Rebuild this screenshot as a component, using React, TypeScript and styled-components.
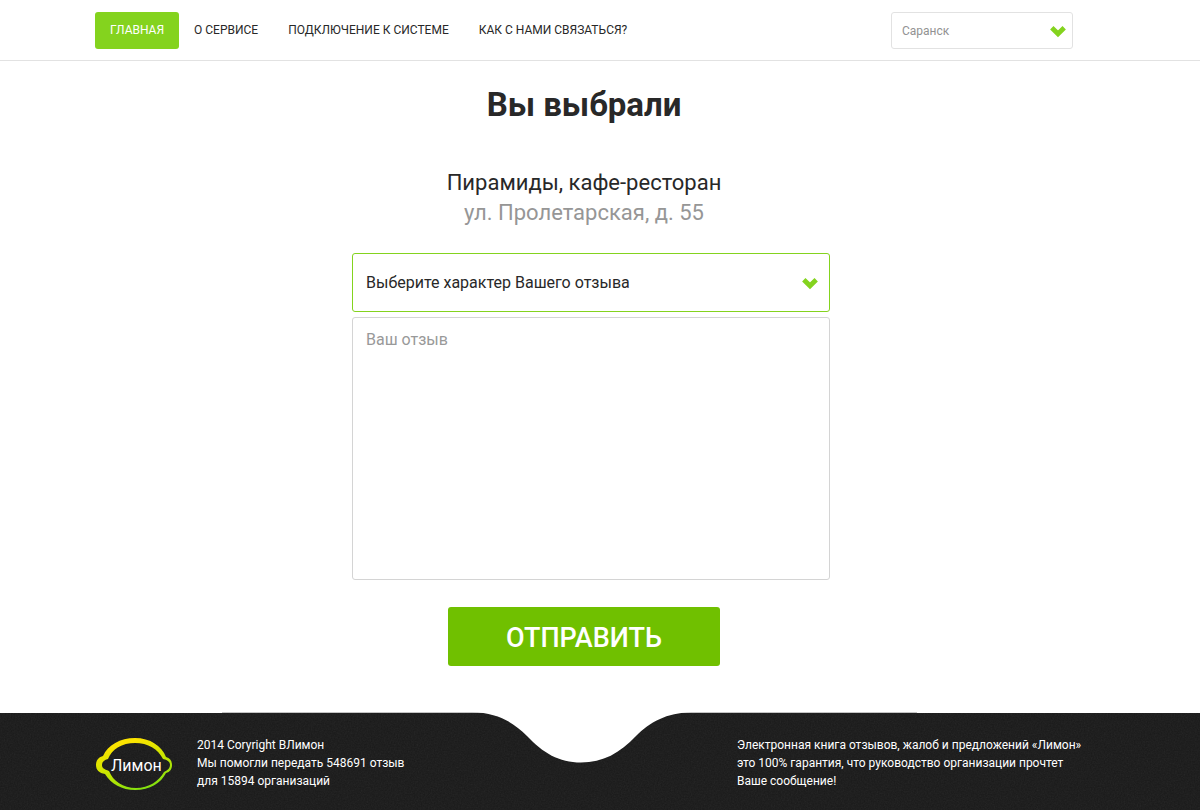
import React from "react";
import styled, { createGlobalStyle } from "styled-components";

const GlobalStyle = createGlobalStyle`
  *, *::before, *::after { box-sizing: border-box; }
  body {
    margin: 0;
    background: #fff;
    color: #282828;
    font-family: Roboto, "Noto Sans", sans-serif;
  }
  #root { min-height: 100vh; display: flex; flex-direction: column; }
  button, select, textarea { font-family: inherit; margin: 0; }
`;

const Header = styled.header`
  padding: 12px 32px 11px 0;
  border-bottom: 1px solid #e2e2e2;
`;

const Container = styled.div`
  width: 100%;
  max-width: 978px;
  margin: 0 auto;
  display: flex;
  justify-content: space-between;
`;

const Nav = styled.nav`
  display: flex;
`;

const NavLink = styled.a<{ $active?: boolean }>`
  padding: 0 15px;
  border-radius: 3px;
  font-size: 12px;
  line-height: 37px;
  white-space: nowrap;
  text-decoration: none;
  text-transform: uppercase;
  color: ${(p) => (p.$active ? "#fff" : "#282828")};
  background: ${(p) => (p.$active ? "#84d31e" : "transparent")};
`;

const SelectBox = styled.div<{ $width: string }>`
  position: relative;
  display: flex;
  align-items: center;
  width: ${(p) => p.$width};
`;

const CitySelect = styled.select`
  appearance: none;
  width: 100%;
  height: 37px;
  padding: 0 32px 0 10px;
  border: 1px solid #e2e2e2;
  border-radius: 3px;
  background: #fff;
  color: #929292;
  font-size: 12px;
`;

const KindSelect = styled.select`
  appearance: none;
  width: 100%;
  height: 59px;
  padding: 0 40px 0 13px;
  border: 1px solid #84d31e;
  border-radius: 3px;
  background: #fff;
  color: #282828;
  font-size: 16px;
`;

const Arrow = styled.svg<{ $right: number }>`
  position: absolute;
  right: ${(p) => p.$right}px;
  width: 18px;
  height: 15px;
  pointer-events: none;
`;

const Main = styled.main`
  flex: 1;
  display: flex;
  flex-direction: column;
  align-items: center;
  padding: 21px 32px 47px 0;
`;

const Title = styled.h1`
  margin: 0 0 40px;
  font-size: 33px;
  line-height: 46px;
  font-weight: 700;
`;

const Place = styled.p<{ $muted?: boolean }>`
  margin: 0;
  font-size: 22px;
  line-height: 30px;
  color: ${(p) => (p.$muted ? "#969696" : "#282828")};
`;

const Form = styled.form`
  width: 100%;
  display: flex;
  flex-direction: column;
  align-items: center;
  padding-top: 25px;
`;

const Fields = styled.div`
  width: 100%;
  max-width: 492px;
  padding-left: 14px;
  display: flex;
  flex-direction: column;
  gap: 5px;
`;

const Review = styled.textarea`
  display: block;
  width: 100%;
  height: 263px;
  padding: 12px 13px;
  border: 1px solid #d4d4d4;
  border-radius: 3px;
  resize: none;
  font-size: 16px;
  line-height: 20px;
  color: #282828;
  &::placeholder { color: #999; opacity: 1; }
`;

const Submit = styled.button`
  width: 272px;
  height: 59px;
  margin-top: 27px;
  padding: 2px 0 0;
  border: 0;
  border-radius: 3px;
  background: #70c000;
  color: #fff;
  font-size: 27px;
  font-weight: 500;
  text-transform: uppercase;
`;

const Footer = styled.footer`
  position: relative;
  padding: 22px 32px 19px 0;
  background: #191919;
  color: #fff;
`;

const Texture = styled.svg`
  position: absolute;
  inset: 0;
  width: 100%;
  height: 100%;
`;

const Wave = styled.svg`
  position: absolute;
  top: -1px;
  left: calc(50% - 378px);
  width: 695px;
  height: 51px;
`;

const FooterRow = styled(Container)`
  position: relative;
`;

const Brand = styled.div`
  display: flex;
  gap: 24px;
`;

const Logo = styled.svg`
  width: 78px;
  height: 54px;
  margin-top: 2px;
`;

const FooterText = styled.p<{ $width?: number }>`
  margin: 0;
  width: ${(p) => (p.$width ? p.$width + "px" : "auto")};
  padding-top: 1px;
  font-size: 12px;
  line-height: 18px;
  white-space: nowrap;
`;

const Chevron = ({ right }: { right: number }) => (
  <Arrow $right={right} viewBox="0 0 18 15" aria-hidden="true">
    <path d="M2.800 4.800 9 10.800 15.200 4.800" fill="none" stroke="#84d31e" strokeWidth="4.800" />
  </Arrow>
);

const LemonLogo = () => (
  <Logo viewBox="0 0 78 54" role="img" aria-label="Лимон">
    <defs>
      <linearGradient id="lemon" x1="0.2" y1="0" x2="0.65" y2="1">
        <stop offset="0.15" stopColor="#fbe300" />
        <stop offset="0.55" stopColor="#c8e600" />
        <stop offset="1" stopColor="#7fe010" />
      </linearGradient>
    </defs>
    <path
      fill="url(#lemon)"
      fillRule="evenodd"
      d="M40 1C55 1 67 9 71 20C75 21 77 24 77 28C77 32 75 35 71 36C66 46 55 53 40 53C27 53 16 47 10 37C4 36 1 33 1 28C1 23 4 20 8 19C13 8 25 1 40 1ZM40 6C27 6 17 12 13 22C9 23 7 25 7 28C7 31 9 32 14 34C18 44 28 51 41 51C54 51 64 44 69 35C73 33 75 31 75 28C75 25 73 23 68 22C63 12 53 6 40 6Z"
    />
    <text x="16" y="34" fontSize="16" fill="#fff">Лимон</text>
  </Logo>
);

export default function App() {
  return (
    <>
      <GlobalStyle />
      <Header>
        <Container>
          <Nav>
            <NavLink href="#" $active>Главная</NavLink>
            <NavLink href="#about">О сервисе</NavLink>
            <NavLink href="#connect">Подключение к системе</NavLink>
            <NavLink href="#contacts">Как с нами связаться?</NavLink>
          </Nav>
          <SelectBox $width="182px">
            <CitySelect aria-label="Город">
              <option>Саранск</option>
            </CitySelect>
            <Chevron right={6} />
          </SelectBox>
        </Container>
      </Header>
      <Main>
        <Title>Вы выбрали</Title>
        <Place>Пирамиды, кафе-ресторан</Place>
        <Place $muted>ул. Пролетарская, д. 55</Place>
        <Form onSubmit={(e) => e.preventDefault()}>
          <Fields>
            <SelectBox $width="100%">
              <KindSelect aria-label="Характер отзыва">
                <option>Выберите характер Вашего отзыва</option>
              </KindSelect>
              <Chevron right={11} />
            </SelectBox>
            <Review aria-label="Ваш отзыв" placeholder="Ваш отзыв" />
          </Fields>
          <Submit type="submit">Отправить</Submit>
        </Form>
      </Main>
      <Footer>
        <Texture aria-hidden="true">
          <filter id="grain">
            <feTurbulence type="fractalNoise" baseFrequency="0.7" numOctaves="2" seed="4" />
            <feColorMatrix type="saturate" values="0" />
          </filter>
          <rect width="100%" height="100%" filter="url(#grain)" opacity="0.08" />
        </Texture>
        <Wave viewBox="0 0 695 51" aria-hidden="true">
          <rect width="695" height="1" fill="#c4c4c4" />
          <path
            fill="#fff"
            d="M250 0C276 1 291 10 305 24C321 41 337 50.500 359 50.500C381 50.500 398 41 414 24C428 10 444 1 470 0Z"
          />
        </Wave>
        <FooterRow>
          <Brand>
            <LemonLogo />
            <FooterText>
              2014 Coryright ВЛимон<br />
              Мы помогли передать 548691 отзыв<br />
              для 15894 организаций
            </FooterText>
          </Brand>
          <FooterText $width={336}>
            Электронная книга отзывов, жалоб и предложений «Лимон»<br />
            это 100% гарантия, что руководство организации прочтет<br />
            Ваше сообщение!
          </FooterText>
        </FooterRow>
      </Footer>
    </>
  );
}
